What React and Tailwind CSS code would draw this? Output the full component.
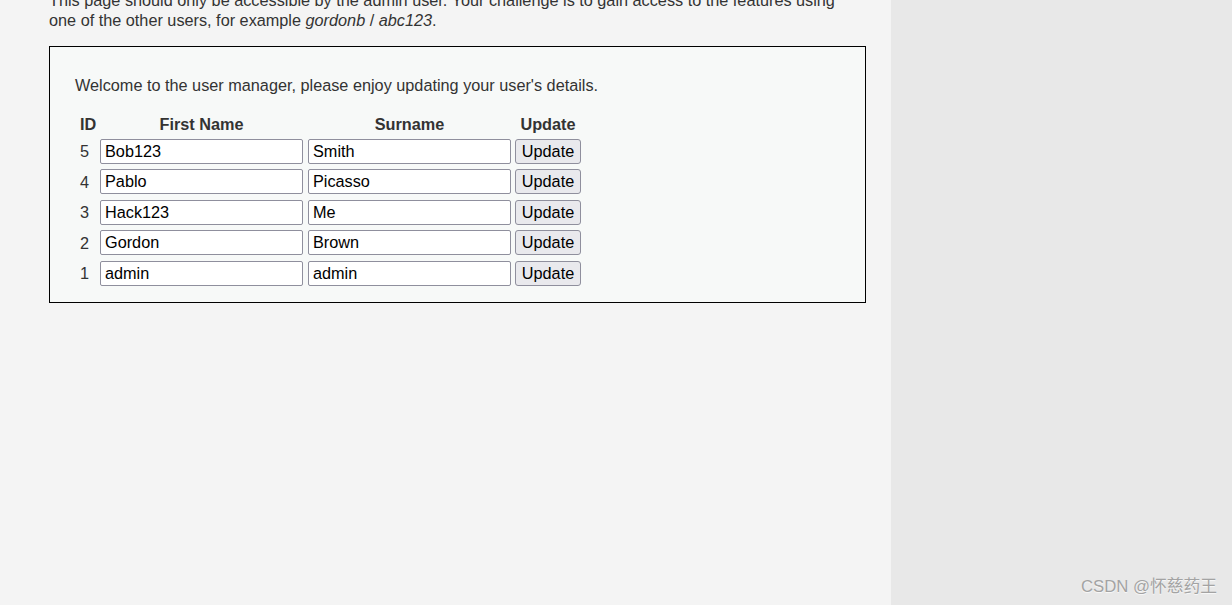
import React from "react";

const users = [
  { id: 5, first: "Bob123", last: "Smith" },
  { id: 4, first: "Pablo", last: "Picasso" },
  { id: 3, first: "Hack123", last: "Me" },
  { id: 2, first: "Gordon", last: "Brown" },
  { id: 1, first: "admin", last: "admin" },
];

const UserRow = ({ user }) => (
  <>
    <div className="flex h-[25px] items-center pl-[2px] text-[16.25px] leading-[18px] text-[#333]">{user.id}</div>
    <input
      defaultValue={user.first}
      className="h-[25px] w-[203px] rounded-[2px] border border-[#8f8f9d] bg-white px-[4px] text-[16.25px] text-black outline-none"
    />
    <input
      defaultValue={user.last}
      className="h-[25px] w-[203px] rounded-[2px] border border-[#8f8f9d] bg-white px-[4px] text-[16.25px] text-black outline-none"
    />
    <button className="h-[25px] w-[66px] rounded-[3px] border border-[#8f8f9d] bg-[#e9e9ed] text-[16.25px] leading-none text-black">
      Update
    </button>
  </>
);

const App = () => {
  return (
    <div
      className="relative flex h-[605px] w-[1232px] overflow-hidden"
      style={{ fontFamily: '"Liberation Sans", Arial, sans-serif' }}
    >
      <div className="w-[891px] bg-[#f4f4f4] pl-[49px]">
        <p className="-mt-[10px] mb-[16px] w-[800px] text-[16.25px] leading-[20px] text-[#333]">
          This page should only be accessible by the admin user. Your challenge is to gain access to the features using
          one of the other users, for example <i>gordonb</i> / <i>abc123</i>.
        </p>

        <div className="w-[817px] border border-black bg-[#f7f9f8] pb-[16px] pl-[25px] pt-[28px]">
          <p className="text-[16.25px] leading-[20px] text-[#333]">
            Welcome to the user manager, please enjoy updating your user's details.
          </p>

          <div className="ml-[3px] mt-[20px] grid grid-cols-[18px_204px_203px_66px] gap-x-[4px] gap-y-[5.5px]">
            <div className="h-[18px] pl-[2px] text-[16.25px] font-bold leading-[18px] text-[#333]">ID</div>
            <div className="h-[18px] pr-[1px] text-center text-[16.25px] font-bold leading-[18px] text-[#333]">First Name</div>
            <div className="h-[18px] text-center text-[16.25px] font-bold leading-[18px] text-[#333]">Surname</div>
            <div className="h-[18px] text-center text-[16.25px] font-bold leading-[18px] text-[#333]">Update</div>
            {users.map((u) => (
              <UserRow key={u.id} user={u} />
            ))}
          </div>
        </div>
      </div>

      <div className="flex-1 bg-[#e8e8e8]" />

      <div
        className="absolute bottom-[8px] right-[15px] text-[16.75px] leading-[20px] text-[#a3a3a3]"
        style={{
          fontFamily: '"Liberation Sans", "Noto Sans CJK SC", sans-serif',
          textShadow: "0 1px 1px rgba(255,255,255,0.8)",
        }}
      >
        CSDN @怀慈药王
      </div>
    </div>
  );
};

export default App;
